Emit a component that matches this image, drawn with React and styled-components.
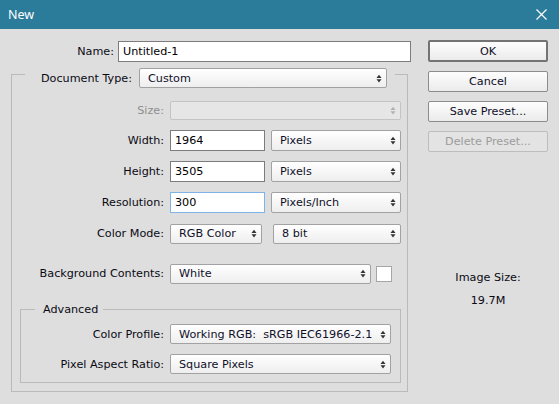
import React from 'react';
import styled, { createGlobalStyle } from 'styled-components';

const GlobalStyle = createGlobalStyle`
    html, body {
        margin: 0;
        padding: 0;
        background: #dedede;
    }
    * {
        box-sizing: border-box;
    }
`;

const Window = styled.div`
    width: 559px;
    height: 404px;
    background: #dedede;
    font-family: 'DejaVu Sans', 'Liberation Sans', sans-serif;
    font-size: 11.2px;
    color: #0a0a14;
    overflow: hidden;
`;

const TitleBar = styled.div`
    height: 29px;
    background: #2b7b9b;
    display: flex;
    align-items: center;
    justify-content: space-between;
    padding: 0 12px 0 8px;
`;

const Title = styled.span`
    color: #fff;
    font-family: 'Noto Sans', 'Open Sans', sans-serif;
    font-size: 12.5px;
    padding-bottom: 1px;
`;

const Body = styled.div`
    display: flex;
    gap: 17px;
    padding: 12px 11px 0 11px;
`;

const FormColumn = styled.div`
    width: 400px;
    display: flex;
    flex-direction: column;
`;

const Row = styled.div`
    display: flex;
    align-items: center;
    height: ${p => p.$h || 21}px;
    margin-top: ${p => p.$mt || 0}px;
`;

const Label = styled.span`
    width: ${p => p.$w}px;
    margin-right: ${p => (p.$gap === undefined ? 6 : p.$gap)}px;
    text-align: ${p => p.$align || 'right'};
    white-space: nowrap;
    color: ${p => (p.$disabled ? '#8e8e8e' : 'inherit')};
`;

const TextInput = styled.input`
    width: ${p => p.$w}px;
    height: 21px;
    border: 1px solid ${p => (p.$focus ? '#7fb3e6' : '#7c7c7c')};
    background: #fff;
    padding: 0 4px;
    font: inherit;
    color: #000;
    outline: none;
    margin: 0;
`;

const SelectBox = styled.div`
    width: ${p => p.$w}px;
    height: ${p => p.$h || 21}px;
    margin-left: ${p => p.$ml || 0}px;
    border: 1px solid ${p => (p.$disabled ? '#c4c4c4' : '#a2a2a2')};
    border-radius: 2px;
    background: ${p =>
        p.$disabled ? '#e6e6e6' : 'linear-gradient(#ffffff, #eeeeee)'};
    display: flex;
    align-items: center;
    justify-content: space-between;
    padding: 0 4px 0 8px;
    white-space: nowrap;
    color: #10102a;
    flex-shrink: 0;
`;

const ArrowIcon = ({ color }) => (
    <svg width="6" height="9" viewBox="0 0 6 9">
        <polygon points="0.5,4 3,0.8 5.5,4" fill={color} />
        <polygon points="0.5,5.2 3,8.4 5.5,5.2" fill={color} />
    </svg>
);

const Select = ({ children, disabled, ...rest }) => (
    <SelectBox $disabled={disabled} {...rest}>
        <span>{children}</span>
        <ArrowIcon color={disabled ? '#b0b0b0' : '#333'} />
    </SelectBox>
);

const Group = styled.fieldset`
    margin: ${p => p.$margin || '0'};
    padding: 0 0 ${p => p.$pb || 8}px 0;
    border: 1px solid #bababa;
    min-inline-size: 0;
`;

const GroupLegend = styled.legend`
    display: flex;
    align-items: center;
    margin-left: ${p => p.$ml}px;
    padding: ${p => p.$pad};
`;

const Swatch = styled.div`
    width: 16px;
    height: 16px;
    margin-left: 5px;
    background: #fff;
    border: 1px solid #a6a6a6;
`;

const ButtonColumn = styled.div`
    width: 120px;
    display: flex;
    flex-direction: column;
    gap: 9px;
    margin-top: -1px;
`;

const Button = styled.div`
    height: ${p => (p.$primary ? 22 : 21)}px;
    border: ${p => (p.$primary ? '2px solid #737373' : `1px solid ${p.$disabled ? '#bdbdbd' : '#8c8c8c'}`)};
    border-radius: 2px;
    background: ${p => (p.$disabled ? '#e3e3e3' : 'linear-gradient(#fdfdfd, #ebebeb)')};
    color: ${p => (p.$disabled ? '#9c9c9c' : '#10102a')};
    display: flex;
    align-items: center;
    justify-content: center;
`;

const SizeInfo = styled.div`
    margin-top: ${p => p.$mt}px;
    text-align: center;
    line-height: 14px;
`;

const CloseIcon = () => (
    <svg width="11" height="11" viewBox="0 0 11 11">
        <path d="M0.5 0.5 L10.5 10.5 M10.5 0.5 L0.5 10.5" stroke="#fff" strokeWidth="1.2" />
    </svg>
);

export default function App() {
    return (
        <Window>
            <GlobalStyle />
            <TitleBar>
                <Title>New</Title>
                <CloseIcon />
            </TitleBar>
            <Body>
                <FormColumn>
                    <Row>
                        <Label $w={103} $gap={4}>Name:</Label>
                        <TextInput $w={293} value="Untitled-1" readOnly />
                    </Row>
                    <Group $margin="-2px 0 0 0" style={{ width: 397 }}>
                        <GroupLegend $ml={13} $pad="8px 8px 0 16px">
                            <Label $w={92} $gap={6} $align="left">Document Type:</Label>
                            <Select $w={248} $h={20}>Custom</Select>
                        </GroupLegend>
                        <Row $mt={12}>
                            <Label $w={152} $disabled>Size:</Label>
                            <Select $w={231} $h={19} disabled></Select>
                        </Row>
                        <Row $mt={9}>
                            <Label $w={152}>Width:</Label>
                            <TextInput $w={95} value="1964" readOnly />
                            <Select $w={130} $ml={6}>Pixels</Select>
                        </Row>
                        <Row $mt={10}>
                            <Label $w={152}>Height:</Label>
                            <TextInput $w={95} value="3505" readOnly />
                            <Select $w={130} $ml={6}>Pixels</Select>
                        </Row>
                        <Row $mt={10}>
                            <Label $w={152}>Resolution:</Label>
                            <TextInput $w={95} value="300" readOnly $focus />
                            <Select $w={130} $ml={6}>Pixels/Inch</Select>
                        </Row>
                        <Row $mt={10}>
                            <Label $w={152}>Color Mode:</Label>
                            <Select $w={92} $h={20}>RGB Color</Select>
                            <Select $w={128} $h={20} $ml={11}>8 bit</Select>
                        </Row>
                        <Row $mt={19}>
                            <Label $w={152}>Background Contents:</Label>
                            <Select $w={201} $h={20}>White</Select>
                            <Swatch />
                        </Row>
                        <Group $margin="19px 6px 0 8px">
                            <GroupLegend $ml={14} $pad="0 5px 0 8px">
                                Advanced
                            </GroupLegend>
                            <Row $mt={8} $h={20}>
                                <Label $w={143}>Color Profile:</Label>
                                <Select $w={221} $h={20}>Working RGB:&nbsp; sRGB IEC61966-2.1</Select>
                            </Row>
                            <Row $mt={10} $h={20}>
                                <Label $w={143}>Pixel Aspect Ratio:</Label>
                                <Select $w={221} $h={20}>Square Pixels</Select>
                            </Row>
                        </Group>
                    </Group>
                </FormColumn>
                <ButtonColumn>
                    <Button $primary>OK</Button>
                    <Button>Cancel</Button>
                    <Button>Save Preset...</Button>
                    <Button $disabled>Delete Preset...</Button>
                    <SizeInfo $mt={110}>Image Size:</SizeInfo>
                    <SizeInfo $mt={0}>19.7M</SizeInfo>
                </ButtonColumn>
            </Body>
        </Window>
    );
}
